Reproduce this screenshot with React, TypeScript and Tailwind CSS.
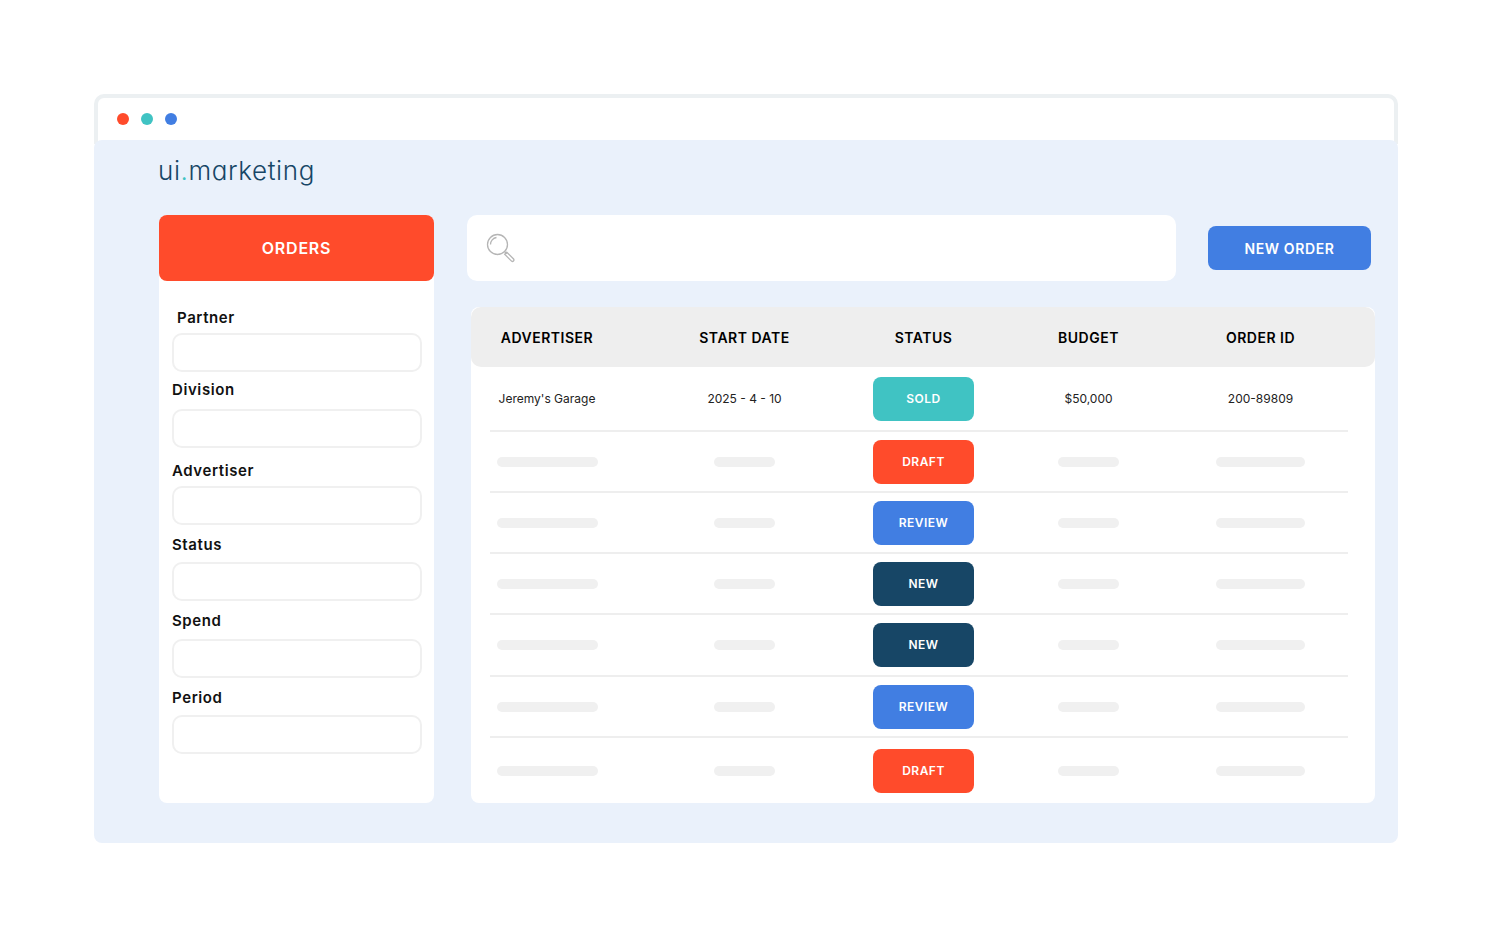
import React from "react";

const inter = { fontFamily: "Inter, 'Liberation Sans', sans-serif" };

const fields = [
  { label: "Partner", labelCls: "pl-[5px] mb-[5px]", boxCls: "mb-[8px]" },
  { label: "Division", labelCls: "mb-[9px]", boxCls: "mb-[13px]" },
  { label: "Advertiser", labelCls: "mb-[5px]", boxCls: "mb-[10px]" },
  { label: "Status", labelCls: "mb-[7px]", boxCls: "mb-[10px]" },
  { label: "Spend", labelCls: "mb-[8px]", boxCls: "mb-[10px]" },
  { label: "Period", labelCls: "mb-[7px]", boxCls: "" },
];

const badges = {
  draft: { text: "DRAFT", cls: "bg-[#ff4b2b]" },
  review: { text: "REVIEW", cls: "bg-[#417ee2]" },
  fresh: { text: "NEW", cls: "bg-[#174666]" },
};

const rows = [
  { badge: badges.draft, h: "h-[59px]" },
  { badge: badges.review, h: "h-[59px]" },
  { badge: badges.fresh, h: "h-[59px]" },
  { badge: badges.fresh, h: "h-[60px]" },
  { badge: badges.review, h: "h-[59px]" },
  { badge: badges.draft, h: "h-[65px]" },
];

const cols = "grid grid-cols-[152px_243px_115px_215px_129px] items-center justify-items-center";

function Bar({ w }: { w: string }) {
  return <div className={`h-[10px] rounded-full bg-[#f0f0f0] ${w}`} />;
}

function Badge({ text, cls }: { text: string; cls: string }) {
  return (
    <div className={`flex h-[44px] w-[101px] items-center justify-center rounded-[8px] text-[12px] font-semibold tracking-[0.5px] text-white ${cls}`}>
      {text}
    </div>
  );
}

function SearchIcon() {
  return (
    <svg width="30" height="30" viewBox="0 0 30 30" fill="none" stroke="#b5b5b5" strokeWidth="1.3">
      <circle cx="11.5" cy="11.5" r="10" />
      <path d="M4.5 11.5a7 7 0 0 1 6-7" />
      <path d="M18.6 18.6l2.2 2.2" />
      <path d="M20.8 19.2l6.8 6.8a1.5 1.5 0 0 1-2.1 2.1l-6.8-6.8z" />
    </svg>
  );
}

export default function App() {
  return (
    <div className="min-h-[937px] bg-white pl-[94px] pt-[94px]" style={inter}>
      <div className="w-[1304px]">
        <div className="flex h-[50px] items-start gap-[12px] rounded-t-[10px] border-4 border-b-0 border-[#ecf0f2] bg-white pl-[19px] pt-[15px]">
          <div className="h-[12px] w-[12px] rounded-full bg-[#ff4b2b]" />
          <div className="h-[12px] w-[12px] rounded-full bg-[#40c3c3]" />
          <div className="h-[12px] w-[12px] rounded-full bg-[#417ee2]" />
        </div>

        <div className="relative -mt-[4px] h-[703px] rounded-[8px] bg-[#eaf1fb] pl-[65px]">
          <div className="flex h-[75px] items-start pt-[15px]">
            <div className="-ml-[1px] text-[26px] font-light leading-[32px] tracking-[0.6px] text-[#174666] [font-feature-settings:'cv11']">
              ui<span className="text-[#40c3c3]">.</span>marketing
            </div>
          </div>

          <div className="flex items-start">
            <div className="h-[588px] w-[275px] rounded-[8px] bg-white">
              <div className="flex h-[66px] items-center justify-center rounded-[8px] bg-[#ff4b2b] text-[16px] font-semibold tracking-[0.8px] text-white">
                ORDERS
              </div>
              <div className="px-[13px] pt-[27px]">
                {fields.map((f) => (
                  <div key={f.label}>
                    <div className={`h-[20px] text-[15px] font-semibold leading-[20px] tracking-[0.6px] text-[#111] ${f.labelCls}`}>
                      {f.label}
                    </div>
                    <div className={`h-[39px] w-[250px] rounded-[10px] border-2 border-[#f0f0f0] bg-white ${f.boxCls}`} />
                  </div>
                ))}
              </div>
            </div>

            <div className="ml-[33px] w-[908px]">
              <div className="flex h-[66px] items-center">
                <div className="flex h-[66px] w-[709px] items-center rounded-[10px] bg-white pl-[19px]">
                  <SearchIcon />
                </div>
                <div className="ml-[32px] flex h-[44px] w-[163px] items-center justify-center rounded-[8px] bg-[#417ee2] text-[14px] font-semibold tracking-[0.6px] text-white">
                  NEW ORDER
                </div>
              </div>

              <div className="ml-[4px] mt-[26px] h-[496px] w-[904px] rounded-[8px] bg-white">
                <div className={`${cols} h-[60px] rounded-[10px] bg-[#eeeeee] text-[14px] font-semibold tracking-[0.5px] text-black`}>
                  <div>ADVERTISER</div>
                  <div>START DATE</div>
                  <div>STATUS</div>
                  <div>BUDGET</div>
                  <div>ORDER ID</div>
                </div>

                <div className={`${cols} h-[63px] text-[12px] text-[#222]`}>
                  <div>Jeremy's Garage</div>
                  <div>2025 - 4 - 10</div>
                  <Badge text="SOLD" cls="bg-[#40c3c3]" />
                  <div>$50,000</div>
                  <div>200-89809</div>
                </div>

                {rows.map((r, i) => (
                  <div key={i}>
                    <div className="ml-[19px] h-[2px] w-[858px] bg-[#eeeeee]" />
                    <div className={`${cols} ${r.h}`}>
                      <Bar w="w-[101px]" />
                      <Bar w="w-[61px]" />
                      <Badge text={r.badge.text} cls={r.badge.cls} />
                      <Bar w="w-[61px]" />
                      <Bar w="w-[89px]" />
                    </div>
                  </div>
                ))}
              </div>
            </div>
          </div>
        </div>
      </div>
    </div>
  );
}
